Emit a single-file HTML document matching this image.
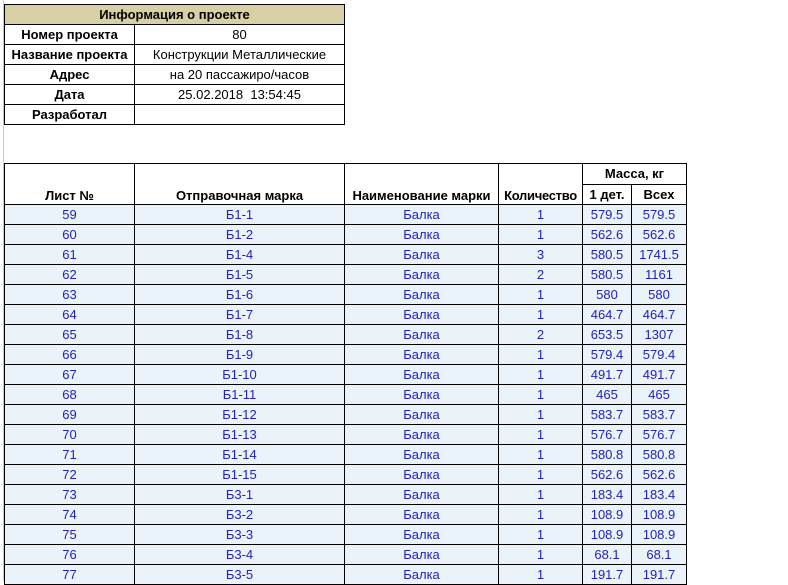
<!DOCTYPE html>
<html><head><meta charset="utf-8"><style>
body{margin:0;width:788px;height:581px;overflow:hidden;background:#fff;font-family:"Liberation Sans",Arial,sans-serif;font-size:13px;position:relative}
table{border-collapse:collapse;position:absolute;table-layout:fixed}
td{border:1px solid #000;padding:0;height:19px;line-height:19px;text-align:center;white-space:nowrap;overflow:hidden}
.info{left:4px;top:4px}
.info .h{background:#d8cfa4;font-weight:bold}
.info td.l{font-weight:bold}
.data{left:4px;top:163px}
.data tr.r td{background:#eaf2fa;color:#2222bb;border:1px solid #000}
.data th{font-weight:bold;border:1px solid #000;font-size:13px;padding:0;white-space:nowrap}
.grid{position:absolute;left:0;top:0;width:3px;height:581px;border-right:1px solid #c8c8c8}
</style></head><body>
<div class="grid"></div>
<table class="info">
<col style="width:130px"><col style="width:210px">
<tr><td colspan="2" class="h">Информация о проекте</td></tr>
<tr><td class="l">Номер проекта</td><td>80</td></tr>
<tr><td class="l">Название проекта</td><td>Конструкции Металлические</td></tr>
<tr><td class="l">Адрес</td><td>на 20 пассажиро/часов</td></tr>
<tr><td class="l">Дата</td><td>25.02.2018&nbsp; 13:54:45</td></tr>
<tr><td class="l">Разработал</td><td></td></tr>
</table>
<table class="data">
<col style="width:130px"><col style="width:210px"><col style="width:154px"><col style="width:84px"><col style="width:49px"><col style="width:55px">
<tr><th rowspan="2" style="vertical-align:bottom;height:39px;padding-bottom:1px">Лист №</th><th rowspan="2" style="vertical-align:bottom;padding-bottom:1px">Отправочная марка</th><th rowspan="2" style="vertical-align:bottom;padding-bottom:1px">Наименование марки</th><th rowspan="2" style="vertical-align:bottom;padding-bottom:1px;letter-spacing:-0.3px">Количество</th><th colspan="2" style="height:19px">Масса, кг</th></tr>
<tr><th style="height:19px">1 дет.</th><th>Всех</th></tr>
<tr class="r"><td>59</td><td>Б1-1</td><td>Балка</td><td>1</td><td>579.5</td><td>579.5</td></tr>
<tr class="r"><td>60</td><td>Б1-2</td><td>Балка</td><td>1</td><td>562.6</td><td>562.6</td></tr>
<tr class="r"><td>61</td><td>Б1-4</td><td>Балка</td><td>3</td><td>580.5</td><td>1741.5</td></tr>
<tr class="r"><td>62</td><td>Б1-5</td><td>Балка</td><td>2</td><td>580.5</td><td>1161</td></tr>
<tr class="r"><td>63</td><td>Б1-6</td><td>Балка</td><td>1</td><td>580</td><td>580</td></tr>
<tr class="r"><td>64</td><td>Б1-7</td><td>Балка</td><td>1</td><td>464.7</td><td>464.7</td></tr>
<tr class="r"><td>65</td><td>Б1-8</td><td>Балка</td><td>2</td><td>653.5</td><td>1307</td></tr>
<tr class="r"><td>66</td><td>Б1-9</td><td>Балка</td><td>1</td><td>579.4</td><td>579.4</td></tr>
<tr class="r"><td>67</td><td>Б1-10</td><td>Балка</td><td>1</td><td>491.7</td><td>491.7</td></tr>
<tr class="r"><td>68</td><td>Б1-11</td><td>Балка</td><td>1</td><td>465</td><td>465</td></tr>
<tr class="r"><td>69</td><td>Б1-12</td><td>Балка</td><td>1</td><td>583.7</td><td>583.7</td></tr>
<tr class="r"><td>70</td><td>Б1-13</td><td>Балка</td><td>1</td><td>576.7</td><td>576.7</td></tr>
<tr class="r"><td>71</td><td>Б1-14</td><td>Балка</td><td>1</td><td>580.8</td><td>580.8</td></tr>
<tr class="r"><td>72</td><td>Б1-15</td><td>Балка</td><td>1</td><td>562.6</td><td>562.6</td></tr>
<tr class="r"><td>73</td><td>Б3-1</td><td>Балка</td><td>1</td><td>183.4</td><td>183.4</td></tr>
<tr class="r"><td>74</td><td>Б3-2</td><td>Балка</td><td>1</td><td>108.9</td><td>108.9</td></tr>
<tr class="r"><td>75</td><td>Б3-3</td><td>Балка</td><td>1</td><td>108.9</td><td>108.9</td></tr>
<tr class="r"><td>76</td><td>Б3-4</td><td>Балка</td><td>1</td><td>68.1</td><td>68.1</td></tr>
<tr class="r"><td>77</td><td>Б3-5</td><td>Балка</td><td>1</td><td>191.7</td><td>191.7</td></tr>
</table>
</body></html>
